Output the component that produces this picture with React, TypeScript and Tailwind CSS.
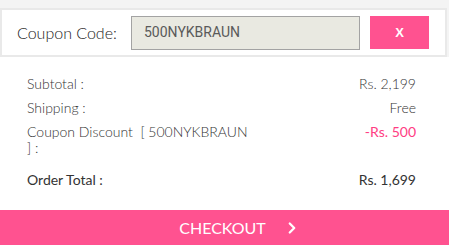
import React from 'react';
import { ChevronRight } from 'lucide-react';

const summary = [
  { label: 'Subtotal :', value: 'Rs. 2,199' },
  { label: 'Shipping :', value: 'Free' },
  { label: 'Coupon Discount  [ 500NYKBRAUN ] :', value: '-Rs. 500', pink: true },
];

const App = () => {
  return (
    <div className="w-[449px] h-[245px] bg-white flex flex-col font-['Lato',sans-serif] overflow-hidden">
      {/* coupon bar */}
      <div className="bg-[#f4f4f4] pt-2 pr-[2px]">
        <div className="bg-white border-2 border-[#e9e9e9] h-[49px] flex items-center pl-[15px]">
          <span className="text-[16px] font-light text-[#222] w-[114px] whitespace-nowrap">Coupon Code:</span>
          <div className="w-[229px] h-[34px] bg-[#e9e9e1] border border-[#a3a3a3] flex items-center pl-3 font-['Roboto',sans-serif] text-[14px] text-[#5a5a5a]">
            500NYKBRAUN
          </div>
          <button className="ml-[10px] w-[59px] h-[33px] bg-[#ff5290] text-white font-bold text-[13px] font-['Liberation_Sans',sans-serif]">
            X
          </button>
        </div>
      </div>

      {/* summary */}
      <div className="pl-[27px] pr-[33px] pt-[19px] flex flex-col gap-2 text-[14px] leading-4 font-light text-[#333]">
        {summary.map((r, i) => (
          <div key={i} className="flex justify-between">
            <span className="w-[224px] whitespace-pre-wrap">{r.label}</span>
            <span className={r.pink ? 'text-[#ff3d83] font-normal' : ''}>{r.value}</span>
          </div>
        ))}
        <div className="flex justify-between mt-2 text-[#333] font-normal">
          <span>Order Total :</span>
          <span>Rs. 1,699</span>
        </div>
      </div>

      {/* checkout */}
      <button className="mt-auto h-[35px] bg-[#ff5290] text-white flex items-center justify-center text-[16px] font-normal">
        <span className="w-[31px]" />
        <span>CHECKOUT</span>
        <ChevronRight size={18} strokeWidth={3} className="ml-[17px]" />
      </button>
    </div>
  );
};

export default App;
